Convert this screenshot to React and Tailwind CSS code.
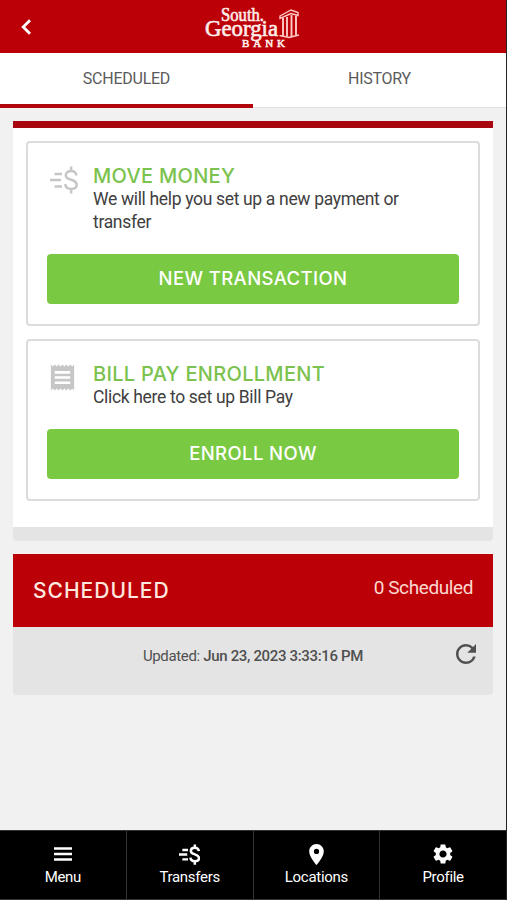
import React, { useState } from 'react';
import { MdReceipt, MdRefresh, MdLocationOn, MdSettings } from 'react-icons/md';

// Dollar sign with speed lines
const TransferIcon = ({ className }) => (
  <svg viewBox="0 0 28 28" fill="none" stroke="currentColor" className={className}>
    <path d="M4.5 8H12M0 14H11M4.5 20.5H12" />
    <path d="M26.5 9.5C26 6.5 24 5 21 5C18 5 15.8 6.7 15.8 9.2C15.8 12 18.5 13 21.2 13.8C24.2 14.7 26.7 15.8 26.7 18.8C26.7 21.5 24.3 23 21.2 23C18 23 15.5 21.4 15.2 18.2M21.1 0.5V5M21.1 23V27.5" />
  </svg>
);

const MenuIcon = () => (
  <svg viewBox="0 0 18 14" className="h-3.5 w-[18px]" fill="none" stroke="currentColor" strokeWidth="2.4">
    <path d="M0 1.5H18M0 7H18M0 12.5H18" />
  </svg>
);

const BankLogo = () => (
  <svg viewBox="0 0 96 42" className="h-[42px] w-24 overflow-visible" fill="#ffeeea" fontFamily="'Liberation Serif', serif">
    <g stroke="#ffeeea" strokeWidth="0.6">
      <text x="16" y="15" fontSize="18.5" textLength="43" lengthAdjust="spacingAndGlyphs">South.</text>
      <text x="0" y="29.5" fontSize="22.5" textLength="73" lengthAdjust="spacingAndGlyphs">Georgia</text>
      <text x="37" y="40.5" fontSize="11" textLength="43" lengthAdjust="spacing">BANK</text>
    </g>
    {/* Building with columns */}
    <g fill="none" stroke="#ffc9c4">
      <path strokeWidth="1.4" d="M75 10L86 4L93 6.5V9.5L86 7.5L75 12.5ZM74.5 29.5L84 31.5L94 29" />
      <path strokeWidth="1.9" d="M78 12V30M82 11V30.5M86.5 9V31M91 10V29.5" />
    </g>
  </svg>
);

const ActionCard = ({ icon, title, description, button, className }) => (
  <div className={`rounded-[4px] border-2 border-[#dcdcdc] bg-white px-[19px] ${className}`}>
    <div className="flex">
      <div className="w-[46px] flex-shrink-0 text-[#c6c6c6]">{icon}</div>
      <div>
        <h2 className="whitespace-nowrap font-[Inter] text-[20px] font-medium leading-6 tracking-[0.3px] text-[#7bc24e]">{title}</h2>
        <p className="w-[330px] text-[17.5px] leading-[23px] tracking-[-0.33px] text-[#404040]">{description}</p>
      </div>
    </div>
    <button className="mt-5 h-[50px] w-full rounded-[4px] bg-[#7ac943] font-[Inter] text-[18.5px] font-medium tracking-[0.4px] text-white">
      {button}
    </button>
  </div>
);

const tabs = ['SCHEDULED', 'HISTORY'];

const navItems = [
  { label: 'Menu', icon: <MenuIcon /> },
  { label: 'Transfers', icon: <TransferIcon className="h-[21px] w-[21px] stroke-[3.3]" /> },
  { label: 'Locations', icon: <MdLocationOn size={25} /> },
  { label: 'Profile', icon: <MdSettings size={24} /> },
];

const App = () => {
  const [activeTab, setActiveTab] = useState('SCHEDULED');

  return (
    <div className="flex h-[900px] w-[507px] flex-col overflow-hidden border-r border-[#222] bg-[#f1f1f1] font-[Roboto,sans-serif]">
      {/* Header */}
      <header className="grid h-[53px] flex-shrink-0 grid-cols-[1fr_auto_1fr] items-center bg-[#bc0007] text-white">
        <button className="pl-[21px]" aria-label="Back">
          <svg viewBox="0 0 10 16" className="h-4 w-2.5" fill="none" stroke="currentColor" strokeWidth="2.8">
            <path d="M9 1.2L2.2 8L9 14.8" />
          </svg>
        </button>
        <BankLogo />
      </header>

      {/* Tabs */}
      <div className="flex h-[55px] flex-shrink-0 border-b border-[#e0e0e0] bg-white">
        {tabs.map((tab) => (
          <button
            key={tab}
            onClick={() => setActiveTab(tab)}
            className={`-mb-px flex-1 border-b-4 text-[16px] tracking-[-0.25px] text-[#5a5a5a] ${
              activeTab === tab ? 'border-[#b0060c]' : 'border-transparent'
            }`}
          >
            {tab}
          </button>
        ))}
      </div>

      <main className="flex-1 px-[13px] pt-[13px]">
        {/* Actions */}
        <section className="h-[420px] rounded-b-[4px] border-t-7 border-b-14 border-t-[#a90710] border-b-[#e4e4e4] bg-white px-[13px] pt-[13px]">
          <ActionCard
            className="h-[185px] pt-[21px]"
            icon={<TransferIcon className="mt-0.5 ml-[3px] h-7 w-7 stroke-[2.5]" />}
            title="MOVE MONEY"
            description="We will help you set up a new payment or transfer"
            button="NEW TRANSACTION"
          />
          <ActionCard
            className="mt-[13px] h-[162px] pt-[21px]"
            icon={<MdReceipt className="h-[31px] w-[31px]" />}
            title="BILL PAY ENROLLMENT"
            description="Click here to set up Bill Pay"
            button="ENROLL NOW"
          />
        </section>

        {/* Scheduled */}
        <section className="mt-[13px] overflow-hidden rounded-b-[4px] bg-[#e4e4e4]">
          <div className="flex h-[73px] items-center justify-between bg-[#bc0007] px-5">
            <h2 className="font-[Inter] text-[21px] font-medium tracking-[1px] text-[#ffe8df]">SCHEDULED</h2>
            <span className="pb-1 text-[19px] tracking-[-0.4px] text-[#ffd9d0]">0 Scheduled</span>
          </div>
          <div className="grid h-[68px] grid-cols-[1fr_auto_1fr] items-start px-3 pt-3">
            <p className="col-start-2 pt-1.5 text-[15px] leading-[22px] tracking-[-0.34px] text-[#505050]">
              Updated: <span className="font-medium">Jun 23, 2023 3:33:16 PM</span>
            </p>
            <button className="justify-self-end text-[#505050]" aria-label="Refresh">
              <MdRefresh size={30} />
            </button>
          </div>
        </section>
      </main>

      {/* Bottom navigation */}
      <nav className="flex h-[70px] flex-shrink-0 border-t border-b border-[#333] bg-black text-white">
        {navItems.map((item) => (
          <button key={item.label} className="flex flex-1 flex-col items-center border-r border-[#333] pt-2.5 text-[15px] tracking-[-0.3px] last:border-r-0">
            <span className="flex h-[26px] items-center">{item.icon}</span>
            <span className="leading-5">{item.label}</span>
          </button>
        ))}
      </nav>
    </div>
  );
};

export default App;
